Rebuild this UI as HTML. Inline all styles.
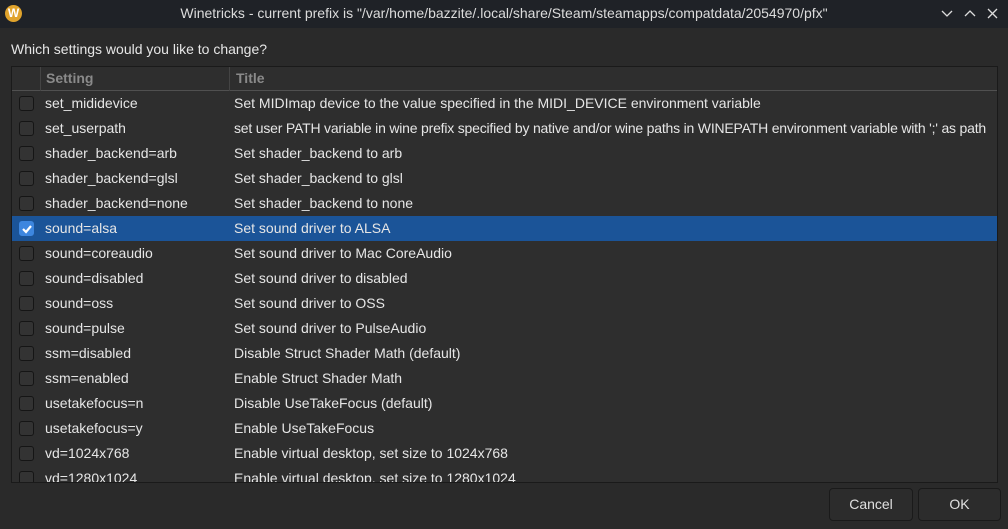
<!DOCTYPE html>
<html><head><meta charset="utf-8"><style>
*{box-sizing:border-box;margin:0;padding:0}
body{width:1008px;height:529px;background:#2a2a2a;font-family:"Liberation Sans","Noto Sans CJK SC",sans-serif;font-size:14px;color:#e6e6e6;position:relative;overflow:hidden}
.tb{position:absolute;left:0;top:0;width:1008px;height:28px;background:#1f2227}
.logo{position:absolute;left:5px;top:5px;width:17px;height:17px;border-radius:50%;background:#e0a32c;color:#fff;font-weight:bold;font-size:12px;text-align:center;line-height:17px}
.ttl{position:absolute;left:0;width:1008px;top:5px;text-align:center;color:#dcdcdc}
.q{position:absolute;left:11px;top:41px}
.list{position:absolute;left:11px;top:66px;width:987px;height:417px;background:#2e2e2e;border:1px solid #1a1a1a;overflow:hidden}
.hd{height:24px;border-bottom:1px solid #505050;position:relative;background:#2e2e2e}
.hd span{position:absolute;top:3px;font-weight:bold;color:#8a8a8a}
.hd i{position:absolute;top:0;width:1px;height:24px;background:#444}
.row{height:25px;position:relative;white-space:nowrap}
.row.sel{background:#1b5498}
.cb{position:absolute;left:7px;top:5px;width:15px;height:15px;border:1px solid #151515;border-radius:3px;background:#333}
.sel .cb{background:#3d86df;border-color:#3d86df}
.c1{position:absolute;left:33px;top:4px}
.c2{position:absolute;left:222px;top:4px}
.btn{position:absolute;top:488px;height:33px;border:1px solid #1a1a1a;border-radius:4px;background:#2c2c2c;text-align:center;line-height:31px;color:#e0e0e0}
</style></head><body>
<div class="tb"><div class="logo">W</div><div class="ttl">Winetricks - current prefix is "/var/home/bazzite/.local/share/Steam/steamapps/compatdata/2054970/pfx"</div>
<svg style="position:absolute;left:935px;top:6px" width="68" height="16" fill="none" stroke="#ddd" stroke-width="1.3"><path d="M7 5l5 5 5-5"/><path d="M30 10l5-5 5 5"/><path d="M53 3l9 9M62 3l-9 9"/></svg></div>
<div class="q">Which settings would you like to change?</div>
<div class="list">
<div class="hd"><i style="left:28px"></i><i style="left:217px"></i><span style="left:34px">Setting</span><span style="left:224px">Title</span></div>
<div class="row"><div class="cb"></div><span class="c1">set_mididevice</span><span class="c2">Set MIDImap device to the value specified in the MIDI_DEVICE environment variable</span></div>
<div class="row"><div class="cb"></div><span class="c1">set_userpath</span><span class="c2" style="letter-spacing:-0.2px">set user PATH variable in wine prefix specified by native and/or wine paths in WINEPATH environment variable with ';' as path</span></div>
<div class="row"><div class="cb"></div><span class="c1">shader_backend=arb</span><span class="c2">Set shader_backend to arb</span></div>
<div class="row"><div class="cb"></div><span class="c1">shader_backend=glsl</span><span class="c2">Set shader_backend to glsl</span></div>
<div class="row"><div class="cb"></div><span class="c1">shader_backend=none</span><span class="c2">Set shader_backend to none</span></div>
<div class="row sel"><div class="cb"><svg width="13" height="13" style="position:absolute;left:0;top:0"><path d="M3 7l3 3 5-6" stroke="#fff" stroke-width="2.2" fill="none"/></svg></div><span class="c1">sound=alsa</span><span class="c2">Set sound driver to ALSA</span></div>
<div class="row"><div class="cb"></div><span class="c1">sound=coreaudio</span><span class="c2">Set sound driver to Mac CoreAudio</span></div>
<div class="row"><div class="cb"></div><span class="c1">sound=disabled</span><span class="c2">Set sound driver to disabled</span></div>
<div class="row"><div class="cb"></div><span class="c1">sound=oss</span><span class="c2">Set sound driver to OSS</span></div>
<div class="row"><div class="cb"></div><span class="c1">sound=pulse</span><span class="c2">Set sound driver to PulseAudio</span></div>
<div class="row"><div class="cb"></div><span class="c1">ssm=disabled</span><span class="c2">Disable Struct Shader Math (default)</span></div>
<div class="row"><div class="cb"></div><span class="c1">ssm=enabled</span><span class="c2">Enable Struct Shader Math</span></div>
<div class="row"><div class="cb"></div><span class="c1">usetakefocus=n</span><span class="c2">Disable UseTakeFocus (default)</span></div>
<div class="row"><div class="cb"></div><span class="c1">usetakefocus=y</span><span class="c2">Enable UseTakeFocus</span></div>
<div class="row"><div class="cb"></div><span class="c1">vd=1024x768</span><span class="c2">Enable virtual desktop, set size to 1024x768</span></div>
<div class="row"><div class="cb"></div><span class="c1">vd=1280x1024</span><span class="c2">Enable virtual desktop, set size to 1280x1024</span></div>
</div>
<div class="btn" style="left:829px;width:84px">Cancel</div>
<div class="btn" style="left:918px;width:83px">OK</div>
</body></html>
